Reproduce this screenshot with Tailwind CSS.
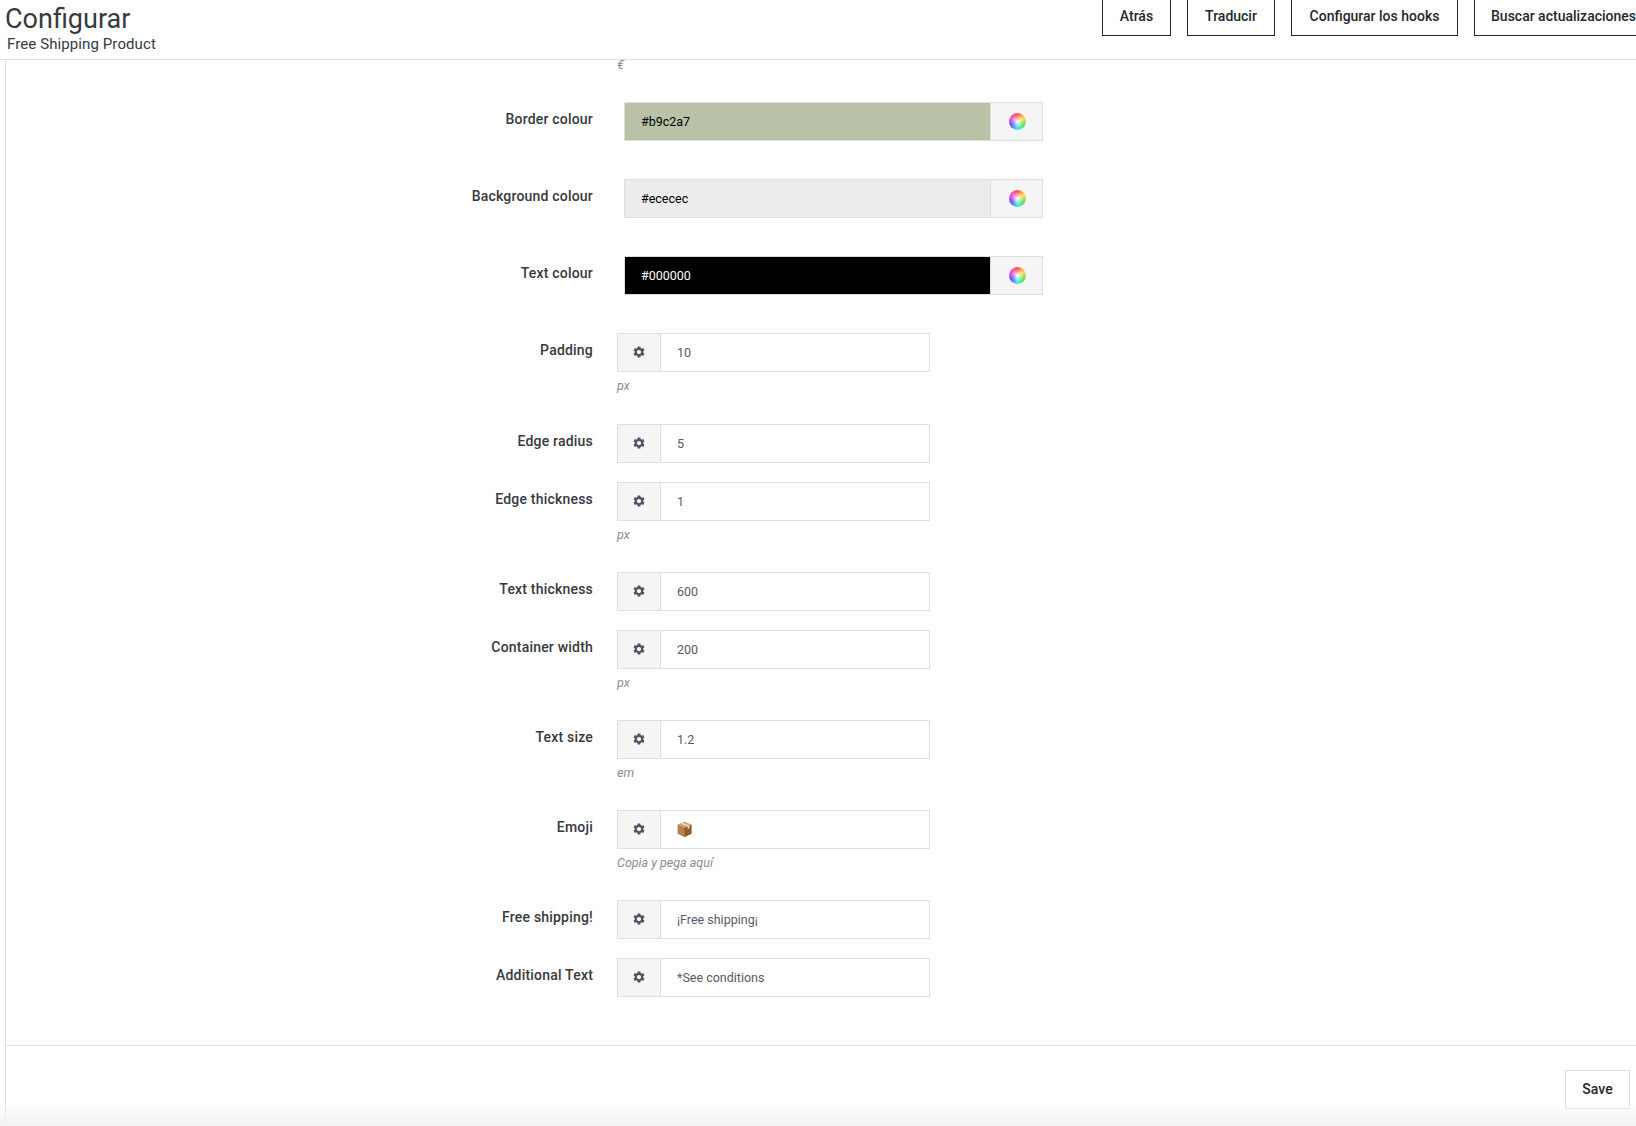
<!DOCTYPE html>
<html lang="es">
<head>
  <meta charset="UTF-8" />
  <title>Configurar</title>
  <script src="https://cdn.jsdelivr.net/npm/@tailwindcss/browser@4"></script>
</head>
<body class="bg-white h-screen overflow-hidden flex flex-col relative font-['Roboto',sans-serif] text-[#363a41]">

  <!-- page head -->
  <header class="h-[60px] shrink-0 border-b border-[#dfdfdf] flex justify-between overflow-hidden">
    <div class="pl-[5px]">
      <h1 class="text-[27px] leading-[36px] pt-px text-[#363a41]">Configurar</h1>
      <p class="text-[15px] leading-[18px] pl-[2px] -mt-[2px] tracking-[0.1px]">Free Shipping Product</p>
    </div>
    <div class="flex gap-4 -mr-[38px] items-start shrink-0">
      <a class="w-[69px] h-[37px] -mt-px pb-[2px] border border-[#25282b] flex items-center justify-center text-[14px] font-medium text-[#25282b]">Atrás</a>
      <a class="w-[88px] h-[37px] -mt-px pb-[2px] border border-[#25282b] flex items-center justify-center text-[14px] font-medium text-[#25282b]">Traducir</a>
      <a class="w-[167px] h-[37px] -mt-px pb-[2px] border border-[#25282b] flex items-center justify-center text-[14px] font-medium text-[#25282b]">Configurar los hooks</a>
      <a class="w-[200px] h-[37px] -mt-px pb-[2px] border border-[#25282b] flex items-center pl-4 text-[14px] font-medium text-[#25282b] whitespace-nowrap">Buscar actualizaciones</a>
    </div>
  </header>

  <main class="flex-1 ml-[5px] border-l border-[#dfdfdf] overflow-hidden">
    <form class="h-[986px] border-b border-[#dfdfdf]">
      <p class="ml-[611px] h-[11px] text-[13px] leading-[9px] italic text-[#8a8d90]">€</p>

      <!-- colour rows -->
      <div class="flex mt-[31px] mb-[38px]">
        <label class="w-[587px] pt-[7px] text-right text-[14px] leading-[20px] font-medium tracking-[0.2px]">Border colour</label>
        <div class="ml-[31px] flex w-[419px] h-[39px] border border-[#dfdfdf]">
          <input readonly value="#b9c2a7" class="flex-1 min-w-0 bg-[#b9c2a7] pl-4 pt-px text-[12.5px] text-black outline-none" />
          <span class="w-[52px] bg-[#f5f5f5] border-l border-[#dfdfdf] flex items-center justify-center">
            <span class="w-[17px] h-[17px] ml-[2px] rounded-full bg-[radial-gradient(circle,#ffffff_0%,transparent_55%),conic-gradient(#ff5a4d,#ffd84d,#5ae65a,#4de6e6,#5a5aff,#ff4dd8,#ff5a4d)]"></span>
          </span>
        </div>
      </div>
      <div class="flex mb-[38px]">
        <label class="w-[587px] pt-[7px] text-right text-[14px] leading-[20px] font-medium tracking-[0.2px]">Background colour</label>
        <div class="ml-[31px] flex w-[419px] h-[39px] border border-[#dfdfdf]">
          <input readonly value="#ececec" class="flex-1 min-w-0 bg-[#ececec] pl-4 pt-px text-[12.5px] text-black outline-none" />
          <span class="w-[52px] bg-[#f5f5f5] border-l border-[#dfdfdf] flex items-center justify-center">
            <span class="w-[17px] h-[17px] ml-[2px] rounded-full bg-[radial-gradient(circle,#ffffff_0%,transparent_55%),conic-gradient(#ff5a4d,#ffd84d,#5ae65a,#4de6e6,#5a5aff,#ff4dd8,#ff5a4d)]"></span>
          </span>
        </div>
      </div>
      <div class="flex mb-[38px]">
        <label class="w-[587px] pt-[7px] text-right text-[14px] leading-[20px] font-medium tracking-[0.2px]">Text colour</label>
        <div class="ml-[31px] flex w-[419px] h-[39px] border border-[#dfdfdf]">
          <input readonly value="#000000" class="flex-1 min-w-0 bg-black pl-4 pt-px text-[12.5px] text-white outline-none" />
          <span class="w-[52px] bg-[#f5f5f5] border-l border-[#dfdfdf] flex items-center justify-center">
            <span class="w-[17px] h-[17px] ml-[2px] rounded-full bg-[radial-gradient(circle,#ffffff_0%,transparent_55%),conic-gradient(#ff5a4d,#ffd84d,#5ae65a,#4de6e6,#5a5aff,#ff4dd8,#ff5a4d)]"></span>
          </span>
        </div>
      </div>

      <!-- prefixed inputs -->
      <div class="flex h-[91px]">
        <label class="w-[587px] pt-[7px] text-right text-[14px] leading-[20px] font-medium tracking-[0.2px]">Padding</label>
        <div class="ml-[24px] w-[313px]">
          <div class="flex h-[39px] border border-[#dfdfdf]">
            <span class="w-[43px] pb-px bg-[#f5f5f5] border-r border-[#dfdfdf] flex items-center justify-center text-[#4d5666]">
              <svg class="w-[14px] h-[14px]" viewBox="0 0 24 24" fill="currentColor"><path d="M19.14 12.94c.04-.3.06-.61.06-.94 0-.32-.02-.64-.07-.94l2.03-1.58c.18-.14.23-.41.12-.61l-1.92-3.32c-.12-.22-.37-.29-.59-.22l-2.39.96c-.5-.38-1.03-.7-1.62-.94l-.36-2.54c-.04-.24-.24-.41-.48-.41h-3.84c-.24 0-.43.17-.47.41l-.36 2.54c-.59.24-1.13.57-1.62.94l-2.39-.96c-.22-.08-.47 0-.59.22L2.74 8.87c-.12.21-.08.47.12.61l2.03 1.58c-.05.3-.09.63-.09.94s.02.64.07.94l-2.03 1.58c-.18.14-.23.41-.12.61l1.92 3.32c.12.22.37.29.59.22l2.39-.96c.5.38 1.03.7 1.62.94l.36 2.54c.05.24.24.41.48.41h3.84c.24 0 .44-.17.47-.41l.36-2.54c.59-.24 1.13-.56 1.62-.94l2.39.96c.22.08.47 0 .59-.22l1.92-3.32c.12-.22.07-.47-.12-.61l-2.01-1.58zM12 15.6c-1.98 0-3.6-1.62-3.6-3.6s1.62-3.6 3.6-3.6 3.6 1.62 3.6 3.6-1.62 3.6-3.6 3.6z"/></svg>
            </span>
            <input readonly value="10" class="flex-1 min-w-0 pl-4 pt-px text-[12.5px] text-[#555b63] outline-none" />
          </div>
          <p class="mt-[5px] text-[12.5px] leading-[17px] italic text-[#8a8d90]">px</p>
        </div>
      </div>
      <div class="flex h-[58px]">
        <label class="w-[587px] pt-[7px] text-right text-[14px] leading-[20px] font-medium tracking-[0.2px]">Edge radius</label>
        <div class="ml-[24px] w-[313px]">
          <div class="flex h-[39px] border border-[#dfdfdf]">
            <span class="w-[43px] pb-px bg-[#f5f5f5] border-r border-[#dfdfdf] flex items-center justify-center text-[#4d5666]">
              <svg class="w-[14px] h-[14px]" viewBox="0 0 24 24" fill="currentColor"><path d="M19.14 12.94c.04-.3.06-.61.06-.94 0-.32-.02-.64-.07-.94l2.03-1.58c.18-.14.23-.41.12-.61l-1.92-3.32c-.12-.22-.37-.29-.59-.22l-2.39.96c-.5-.38-1.03-.7-1.62-.94l-.36-2.54c-.04-.24-.24-.41-.48-.41h-3.84c-.24 0-.43.17-.47.41l-.36 2.54c-.59.24-1.13.57-1.62.94l-2.39-.96c-.22-.08-.47 0-.59.22L2.74 8.87c-.12.21-.08.47.12.61l2.03 1.58c-.05.3-.09.63-.09.94s.02.64.07.94l-2.03 1.58c-.18.14-.23.41-.12.61l1.92 3.32c.12.22.37.29.59.22l2.39-.96c.5.38 1.03.7 1.62.94l.36 2.54c.05.24.24.41.48.41h3.84c.24 0 .44-.17.47-.41l.36-2.54c.59-.24 1.13-.56 1.62-.94l2.39.96c.22.08.47 0 .59-.22l1.92-3.32c.12-.22.07-.47-.12-.61l-2.01-1.58zM12 15.6c-1.98 0-3.6-1.62-3.6-3.6s1.62-3.6 3.6-3.6 3.6 1.62 3.6 3.6-1.62 3.6-3.6 3.6z"/></svg>
            </span>
            <input readonly value="5" class="flex-1 min-w-0 pl-4 pt-px text-[12.5px] text-[#555b63] outline-none" />
          </div>
        </div>
      </div>
      <div class="flex h-[90px]">
        <label class="w-[587px] pt-[7px] text-right text-[14px] leading-[20px] font-medium tracking-[0.2px]">Edge thickness</label>
        <div class="ml-[24px] w-[313px]">
          <div class="flex h-[39px] border border-[#dfdfdf]">
            <span class="w-[43px] pb-px bg-[#f5f5f5] border-r border-[#dfdfdf] flex items-center justify-center text-[#4d5666]">
              <svg class="w-[14px] h-[14px]" viewBox="0 0 24 24" fill="currentColor"><path d="M19.14 12.94c.04-.3.06-.61.06-.94 0-.32-.02-.64-.07-.94l2.03-1.58c.18-.14.23-.41.12-.61l-1.92-3.32c-.12-.22-.37-.29-.59-.22l-2.39.96c-.5-.38-1.03-.7-1.62-.94l-.36-2.54c-.04-.24-.24-.41-.48-.41h-3.84c-.24 0-.43.17-.47.41l-.36 2.54c-.59.24-1.13.57-1.62.94l-2.39-.96c-.22-.08-.47 0-.59.22L2.74 8.87c-.12.21-.08.47.12.61l2.03 1.58c-.05.3-.09.63-.09.94s.02.64.07.94l-2.03 1.58c-.18.14-.23.41-.12.61l1.92 3.32c.12.22.37.29.59.22l2.39-.96c.5.38 1.03.7 1.62.94l.36 2.54c.05.24.24.41.48.41h3.84c.24 0 .44-.17.47-.41l.36-2.54c.59-.24 1.13-.56 1.62-.94l2.39.96c.22.08.47 0 .59-.22l1.92-3.32c.12-.22.07-.47-.12-.61l-2.01-1.58zM12 15.6c-1.98 0-3.6-1.62-3.6-3.6s1.62-3.6 3.6-3.6 3.6 1.62 3.6 3.6-1.62 3.6-3.6 3.6z"/></svg>
            </span>
            <input readonly value="1" class="flex-1 min-w-0 pl-4 pt-px text-[12.5px] text-[#555b63] outline-none" />
          </div>
          <p class="mt-[5px] text-[12.5px] leading-[17px] italic text-[#8a8d90]">px</p>
        </div>
      </div>
      <div class="flex h-[58px]">
        <label class="w-[587px] pt-[7px] text-right text-[14px] leading-[20px] font-medium tracking-[0.2px]">Text thickness</label>
        <div class="ml-[24px] w-[313px]">
          <div class="flex h-[39px] border border-[#dfdfdf]">
            <span class="w-[43px] pb-px bg-[#f5f5f5] border-r border-[#dfdfdf] flex items-center justify-center text-[#4d5666]">
              <svg class="w-[14px] h-[14px]" viewBox="0 0 24 24" fill="currentColor"><path d="M19.14 12.94c.04-.3.06-.61.06-.94 0-.32-.02-.64-.07-.94l2.03-1.58c.18-.14.23-.41.12-.61l-1.92-3.32c-.12-.22-.37-.29-.59-.22l-2.39.96c-.5-.38-1.03-.7-1.62-.94l-.36-2.54c-.04-.24-.24-.41-.48-.41h-3.84c-.24 0-.43.17-.47.41l-.36 2.54c-.59.24-1.13.57-1.62.94l-2.39-.96c-.22-.08-.47 0-.59.22L2.74 8.87c-.12.21-.08.47.12.61l2.03 1.58c-.05.3-.09.63-.09.94s.02.64.07.94l-2.03 1.58c-.18.14-.23.41-.12.61l1.92 3.32c.12.22.37.29.59.22l2.39-.96c.5.38 1.03.7 1.62.94l.36 2.54c.05.24.24.41.48.41h3.84c.24 0 .44-.17.47-.41l.36-2.54c.59-.24 1.13-.56 1.62-.94l2.39.96c.22.08.47 0 .59-.22l1.92-3.32c.12-.22.07-.47-.12-.61l-2.01-1.58zM12 15.6c-1.98 0-3.6-1.62-3.6-3.6s1.62-3.6 3.6-3.6 3.6 1.62 3.6 3.6-1.62 3.6-3.6 3.6z"/></svg>
            </span>
            <input readonly value="600" class="flex-1 min-w-0 pl-4 pt-px text-[12.5px] text-[#555b63] outline-none" />
          </div>
        </div>
      </div>
      <div class="flex h-[90px]">
        <label class="w-[587px] pt-[7px] text-right text-[14px] leading-[20px] font-medium tracking-[0.2px]">Container width</label>
        <div class="ml-[24px] w-[313px]">
          <div class="flex h-[39px] border border-[#dfdfdf]">
            <span class="w-[43px] pb-px bg-[#f5f5f5] border-r border-[#dfdfdf] flex items-center justify-center text-[#4d5666]">
              <svg class="w-[14px] h-[14px]" viewBox="0 0 24 24" fill="currentColor"><path d="M19.14 12.94c.04-.3.06-.61.06-.94 0-.32-.02-.64-.07-.94l2.03-1.58c.18-.14.23-.41.12-.61l-1.92-3.32c-.12-.22-.37-.29-.59-.22l-2.39.96c-.5-.38-1.03-.7-1.62-.94l-.36-2.54c-.04-.24-.24-.41-.48-.41h-3.84c-.24 0-.43.17-.47.41l-.36 2.54c-.59.24-1.13.57-1.62.94l-2.39-.96c-.22-.08-.47 0-.59.22L2.74 8.87c-.12.21-.08.47.12.61l2.03 1.58c-.05.3-.09.63-.09.94s.02.64.07.94l-2.03 1.58c-.18.14-.23.41-.12.61l1.92 3.32c.12.22.37.29.59.22l2.39-.96c.5.38 1.03.7 1.62.94l.36 2.54c.05.24.24.41.48.41h3.84c.24 0 .44-.17.47-.41l.36-2.54c.59-.24 1.13-.56 1.62-.94l2.39.96c.22.08.47 0 .59-.22l1.92-3.32c.12-.22.07-.47-.12-.61l-2.01-1.58zM12 15.6c-1.98 0-3.6-1.62-3.6-3.6s1.62-3.6 3.6-3.6 3.6 1.62 3.6 3.6-1.62 3.6-3.6 3.6z"/></svg>
            </span>
            <input readonly value="200" class="flex-1 min-w-0 pl-4 pt-px text-[12.5px] text-[#555b63] outline-none" />
          </div>
          <p class="mt-[5px] text-[12.5px] leading-[17px] italic text-[#8a8d90]">px</p>
        </div>
      </div>
      <div class="flex h-[90px]">
        <label class="w-[587px] pt-[7px] text-right text-[14px] leading-[20px] font-medium tracking-[0.2px]">Text size</label>
        <div class="ml-[24px] w-[313px]">
          <div class="flex h-[39px] border border-[#dfdfdf]">
            <span class="w-[43px] pb-px bg-[#f5f5f5] border-r border-[#dfdfdf] flex items-center justify-center text-[#4d5666]">
              <svg class="w-[14px] h-[14px]" viewBox="0 0 24 24" fill="currentColor"><path d="M19.14 12.94c.04-.3.06-.61.06-.94 0-.32-.02-.64-.07-.94l2.03-1.58c.18-.14.23-.41.12-.61l-1.92-3.32c-.12-.22-.37-.29-.59-.22l-2.39.96c-.5-.38-1.03-.7-1.62-.94l-.36-2.54c-.04-.24-.24-.41-.48-.41h-3.84c-.24 0-.43.17-.47.41l-.36 2.54c-.59.24-1.13.57-1.62.94l-2.39-.96c-.22-.08-.47 0-.59.22L2.74 8.87c-.12.21-.08.47.12.61l2.03 1.58c-.05.3-.09.63-.09.94s.02.64.07.94l-2.03 1.58c-.18.14-.23.41-.12.61l1.92 3.32c.12.22.37.29.59.22l2.39-.96c.5.38 1.03.7 1.62.94l.36 2.54c.05.24.24.41.48.41h3.84c.24 0 .44-.17.47-.41l.36-2.54c.59-.24 1.13-.56 1.62-.94l2.39.96c.22.08.47 0 .59-.22l1.92-3.32c.12-.22.07-.47-.12-.61l-2.01-1.58zM12 15.6c-1.98 0-3.6-1.62-3.6-3.6s1.62-3.6 3.6-3.6 3.6 1.62 3.6 3.6-1.62 3.6-3.6 3.6z"/></svg>
            </span>
            <input readonly value="1.2" class="flex-1 min-w-0 pl-4 pt-px text-[12.5px] text-[#555b63] outline-none" />
          </div>
          <p class="mt-[5px] text-[12.5px] leading-[17px] italic text-[#8a8d90]">em</p>
        </div>
      </div>
      <div class="flex h-[90px]">
        <label class="w-[587px] pt-[7px] text-right text-[14px] leading-[20px] font-medium tracking-[0.2px]">Emoji</label>
        <div class="ml-[24px] w-[313px]">
          <div class="flex h-[39px] border border-[#dfdfdf]">
            <span class="w-[43px] pb-px bg-[#f5f5f5] border-r border-[#dfdfdf] flex items-center justify-center text-[#4d5666]">
              <svg class="w-[14px] h-[14px]" viewBox="0 0 24 24" fill="currentColor"><path d="M19.14 12.94c.04-.3.06-.61.06-.94 0-.32-.02-.64-.07-.94l2.03-1.58c.18-.14.23-.41.12-.61l-1.92-3.32c-.12-.22-.37-.29-.59-.22l-2.39.96c-.5-.38-1.03-.7-1.62-.94l-.36-2.54c-.04-.24-.24-.41-.48-.41h-3.84c-.24 0-.43.17-.47.41l-.36 2.54c-.59.24-1.13.57-1.62.94l-2.39-.96c-.22-.08-.47 0-.59.22L2.74 8.87c-.12.21-.08.47.12.61l2.03 1.58c-.05.3-.09.63-.09.94s.02.64.07.94l-2.03 1.58c-.18.14-.23.41-.12.61l1.92 3.32c.12.22.37.29.59.22l2.39-.96c.5.38 1.03.7 1.62.94l.36 2.54c.05.24.24.41.48.41h3.84c.24 0 .44-.17.47-.41l.36-2.54c.59-.24 1.13-.56 1.62-.94l2.39.96c.22.08.47 0 .59-.22l1.92-3.32c.12-.22.07-.47-.12-.61l-2.01-1.58zM12 15.6c-1.98 0-3.6-1.62-3.6-3.6s1.62-3.6 3.6-3.6 3.6 1.62 3.6 3.6-1.62 3.6-3.6 3.6z"/></svg>
            </span>
            <span class="flex-1 pl-[15px] pb-px flex items-center">
              <!-- package emoji -->
              <svg class="w-[17px] h-[17px]" viewBox="0 0 16 16"><path d="M8 1 14.5 3.6V12L8 15 1.5 12V3.6Z" fill="#b57f4c"/><path d="M8 6.4 14.5 3.6V12L8 15Z" fill="#8f5c30"/><path d="M8 1 14.5 3.6 8 6.4 1.5 3.6Z" fill="#d3a473"/><path d="M4.6 2.4 11 5.1V7.6L12.6 6.9V4.4L6.2 1.7Z" fill="#efe0c8"/></svg>
            </span>
          </div>
          <p class="mt-[5px] text-[12.5px] leading-[17px] italic text-[#8a8d90]">Copia y pega aquí</p>
        </div>
      </div>
      <div class="flex h-[58px]">
        <label class="w-[587px] pt-[7px] text-right text-[14px] leading-[20px] font-medium tracking-[0.2px]">Free shipping!</label>
        <div class="ml-[24px] w-[313px]">
          <div class="flex h-[39px] border border-[#dfdfdf]">
            <span class="w-[43px] pb-px bg-[#f5f5f5] border-r border-[#dfdfdf] flex items-center justify-center text-[#4d5666]">
              <svg class="w-[14px] h-[14px]" viewBox="0 0 24 24" fill="currentColor"><path d="M19.14 12.94c.04-.3.06-.61.06-.94 0-.32-.02-.64-.07-.94l2.03-1.58c.18-.14.23-.41.12-.61l-1.92-3.32c-.12-.22-.37-.29-.59-.22l-2.39.96c-.5-.38-1.03-.7-1.62-.94l-.36-2.54c-.04-.24-.24-.41-.48-.41h-3.84c-.24 0-.43.17-.47.41l-.36 2.54c-.59.24-1.13.57-1.62.94l-2.39-.96c-.22-.08-.47 0-.59.22L2.74 8.87c-.12.21-.08.47.12.61l2.03 1.58c-.05.3-.09.63-.09.94s.02.64.07.94l-2.03 1.58c-.18.14-.23.41-.12.61l1.92 3.32c.12.22.37.29.59.22l2.39-.96c.5.38 1.03.7 1.62.94l.36 2.54c.05.24.24.41.48.41h3.84c.24 0 .44-.17.47-.41l.36-2.54c.59-.24 1.13-.56 1.62-.94l2.39.96c.22.08.47 0 .59-.22l1.92-3.32c.12-.22.07-.47-.12-.61l-2.01-1.58zM12 15.6c-1.98 0-3.6-1.62-3.6-3.6s1.62-3.6 3.6-3.6 3.6 1.62 3.6 3.6-1.62 3.6-3.6 3.6z"/></svg>
            </span>
            <input readonly value="¡Free shipping¡" class="flex-1 min-w-0 pl-4 pt-px text-[12.5px] text-[#555b63] outline-none" />
          </div>
        </div>
      </div>
      <div class="flex h-[58px]">
        <label class="w-[587px] pt-[7px] text-right text-[14px] leading-[20px] font-medium tracking-[0.2px]">Additional Text</label>
        <div class="ml-[24px] w-[313px]">
          <div class="flex h-[39px] border border-[#dfdfdf]">
            <span class="w-[43px] pb-px bg-[#f5f5f5] border-r border-[#dfdfdf] flex items-center justify-center text-[#4d5666]">
              <svg class="w-[14px] h-[14px]" viewBox="0 0 24 24" fill="currentColor"><path d="M19.14 12.94c.04-.3.06-.61.06-.94 0-.32-.02-.64-.07-.94l2.03-1.58c.18-.14.23-.41.12-.61l-1.92-3.32c-.12-.22-.37-.29-.59-.22l-2.39.96c-.5-.38-1.03-.7-1.62-.94l-.36-2.54c-.04-.24-.24-.41-.48-.41h-3.84c-.24 0-.43.17-.47.41l-.36 2.54c-.59.24-1.13.57-1.62.94l-2.39-.96c-.22-.08-.47 0-.59.22L2.74 8.87c-.12.21-.08.47.12.61l2.03 1.58c-.05.3-.09.63-.09.94s.02.64.07.94l-2.03 1.58c-.18.14-.23.41-.12.61l1.92 3.32c.12.22.37.29.59.22l2.39-.96c.5.38 1.03.7 1.62.94l.36 2.54c.05.24.24.41.48.41h3.84c.24 0 .44-.17.47-.41l.36-2.54c.59-.24 1.13-.56 1.62-.94l2.39.96c.22.08.47 0 .59-.22l1.92-3.32c.12-.22.07-.47-.12-.61l-2.01-1.58zM12 15.6c-1.98 0-3.6-1.62-3.6-3.6s1.62-3.6 3.6-3.6 3.6 1.62 3.6 3.6-1.62 3.6-3.6 3.6z"/></svg>
            </span>
            <input readonly value="*See conditions" class="flex-1 min-w-0 pl-4 pt-px text-[12.5px] text-[#555b63] outline-none" />
          </div>
        </div>
      </div>
    </form>

    <footer class="flex justify-end pt-[24px] pr-[6px]">
      <button class="w-[65px] h-[39px] border border-[#dfdfdf] bg-white text-[14px] font-medium text-[#25282b]">Save</button>
    </footer>
  </main>

  <!-- soft shadow at the window edge -->
  <div class="absolute left-0 right-0 bottom-0 h-[24px] bg-gradient-to-b from-white/0 to-[#f3f3f3] pointer-events-none"></div>
</body>
</html>
